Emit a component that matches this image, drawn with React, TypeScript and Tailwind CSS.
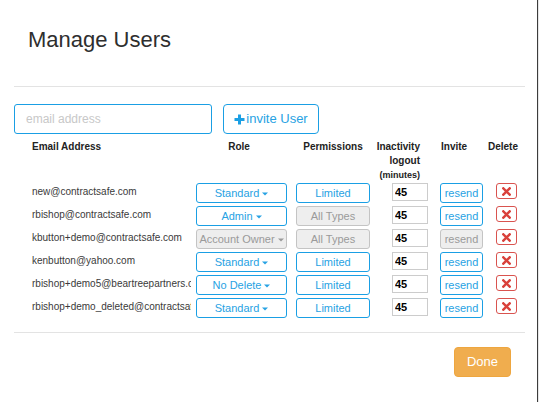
import React from 'react';

type Tone = 'blue' | 'gray';

interface UserRow {
  email: string;
  role: string;
  roleTone: Tone;
  perm: string;
  permTone: Tone;
  inviteTone: Tone;
}

const USERS: UserRow[] = [
  { email: 'new@contractsafe.com', role: 'Standard', roleTone: 'blue', perm: 'Limited', permTone: 'blue', inviteTone: 'blue' },
  { email: 'rbishop@contractsafe.com', role: 'Admin', roleTone: 'blue', perm: 'All Types', permTone: 'gray', inviteTone: 'blue' },
  { email: 'kbutton+demo@contractsafe.com', role: 'Account Owner', roleTone: 'gray', perm: 'All Types', permTone: 'gray', inviteTone: 'gray' },
  { email: 'kenbutton@yahoo.com', role: 'Standard', roleTone: 'blue', perm: 'Limited', permTone: 'blue', inviteTone: 'blue' },
  { email: 'rbishop+demo5@beartreepartners.com', role: 'No Delete', roleTone: 'blue', perm: 'Limited', permTone: 'blue', inviteTone: 'blue' },
  { email: 'rbishop+demo_deleted@contractsafe.com', role: 'Standard', roleTone: 'blue', perm: 'Limited', permTone: 'blue', inviteTone: 'blue' },
];

const toneCls = (t: Tone) =>
  t === 'blue'
    ? 'border-[#1a9fe4] text-[#27a2e3] bg-white'
    : 'border-[#c4c4c4] text-[#9a9a9a] bg-[#eeeeee]';

const Caret = ({ tone }: { tone: Tone }) => (
  <svg width="6" height="4" viewBox="0 0 6 4" className="ml-[3px] mt-[1px] shrink-0">
    <path d="M0 0.5 H6 L3 3.5 Z" fill={tone === 'blue' ? '#27a2e3' : '#9a9a9a'} />
  </svg>
);

const DeleteIcon = () => (
  <svg width="9" height="9" viewBox="0 0 9 9">
    <path d="M1.3 1.3 L7.7 7.7 M7.7 1.3 L1.3 7.7" stroke="#d9413b" strokeWidth="2.4" strokeLinecap="square" />
  </svg>
);

export default function App() {
  return (
    <div className="flex h-[402px] w-[539px] bg-white" style={{ fontFamily: '"Liberation Sans", Arial, Helvetica, sans-serif' }}>
      <div className="flex w-[537px] flex-col bg-white">
        {/* header */}
        <div className="pl-[28px] pt-[28px] pb-[34px]">
          <h1 className="text-[22px] leading-[24px] text-[#2e2e2e]">Manage Users</h1>
        </div>

        <div className="mx-[14px] w-[511px] border-t border-[#e3e3e3]" />

        {/* body */}
        <div className="px-[14px] pt-[17px]">
          <div className="flex items-center gap-[11px]">
            <input
              placeholder="email address"
              className="h-[30px] w-[198px] rounded-[3px] border border-[#1a9fe4] px-[11px] text-[12px] text-[#333] outline-none placeholder:text-[#c8c8c8]"
            />
            <button className="flex h-[30px] w-[96px] items-center justify-center rounded-[4px] border border-[#1a9fe4] bg-white text-[13px] text-[#27a2e3]">
              <svg width="11" height="11" viewBox="0 0 11 11" className="mr-[1px]">
                <path d="M5.5 0.5 V10.5 M0.5 5.5 H10.5" stroke="#1a9fe4" strokeWidth="3" />
              </svg>
              invite User
            </button>
          </div>

          {/* column headings */}
          <div className="mt-[6px] flex pl-[18px] text-[10px] font-bold leading-[14px] text-[#222]">
            <div className="w-[164px]">Email Address</div>
            <div className="w-[86px] text-center">Role</div>
            <div className="ml-[14px] w-[74px] text-center">Permissions</div>
            <div className="w-[50px] text-right">
              <div>Inactivity</div>
              <div>logout</div>
              <div className="text-[9px]">(minutes)</div>
            </div>
            <div className="ml-[21px] w-[47px]">Invite</div>
            <div className="w-[29px] text-right">Delete</div>
          </div>

          {/* rows */}
          <div className="mt-[1px] flex flex-col gap-[3px] pl-[18px]">
            {USERS.map((u) => (
              <div key={u.email} className="flex h-[20px] items-start">
                <div className="w-[159px] overflow-hidden whitespace-nowrap pt-[2px] text-[10px] leading-[14px] text-[#3a3a3a]">
                  {u.email}
                </div>
                <div className="ml-[5px] flex w-[100px]">
                  <button className={`flex h-[20px] w-[91px] items-center justify-center rounded-[3px] border text-[11px] leading-[18px] ${toneCls(u.roleTone)}`}>
                    {u.role}
                    <Caret tone={u.roleTone} />
                  </button>
                </div>
                <div className="flex w-[96px]">
                  <button className={`h-[20px] w-[74px] rounded-[3px] border text-[11px] leading-[18px] ${toneCls(u.permTone)}`}>
                    {u.perm}
                  </button>
                </div>
                <div className="flex w-[48px]">
                  <input
                    defaultValue="45"
                    className="h-[18px] w-[36px] border border-[#cccccc] px-[2px] text-[11px] font-bold text-black outline-none"
                  />
                </div>
                <div className="flex w-[56px]">
                  <button className={`h-[20px] w-[43px] rounded-[3px] border text-[11px] leading-[18px] ${toneCls(u.inviteTone)}`}>
                    resend
                  </button>
                </div>
                <div className="flex">
                  <button className="flex h-[16px] w-[21px] items-center justify-center rounded-[3px] border border-[#d9534f] bg-white">
                    <DeleteIcon />
                  </button>
                </div>
              </div>
            ))}
          </div>
        </div>

        <div className="mx-[14px] mt-[14px] w-[511px] border-t border-[#e3e3e3]" />

        {/* footer */}
        <div className="flex justify-end pt-[14px] pr-[26px]">
          <button className="h-[30px] w-[57px] rounded-[4px] border border-[#eea63f] bg-[#f0ad4e] text-[13px] text-white">
            Done
          </button>
        </div>
      </div>
      <div className="w-px bg-[#3c3c3c]" />
      <div className="w-px bg-[#e6e6e6]" />
    </div>
  );
}
